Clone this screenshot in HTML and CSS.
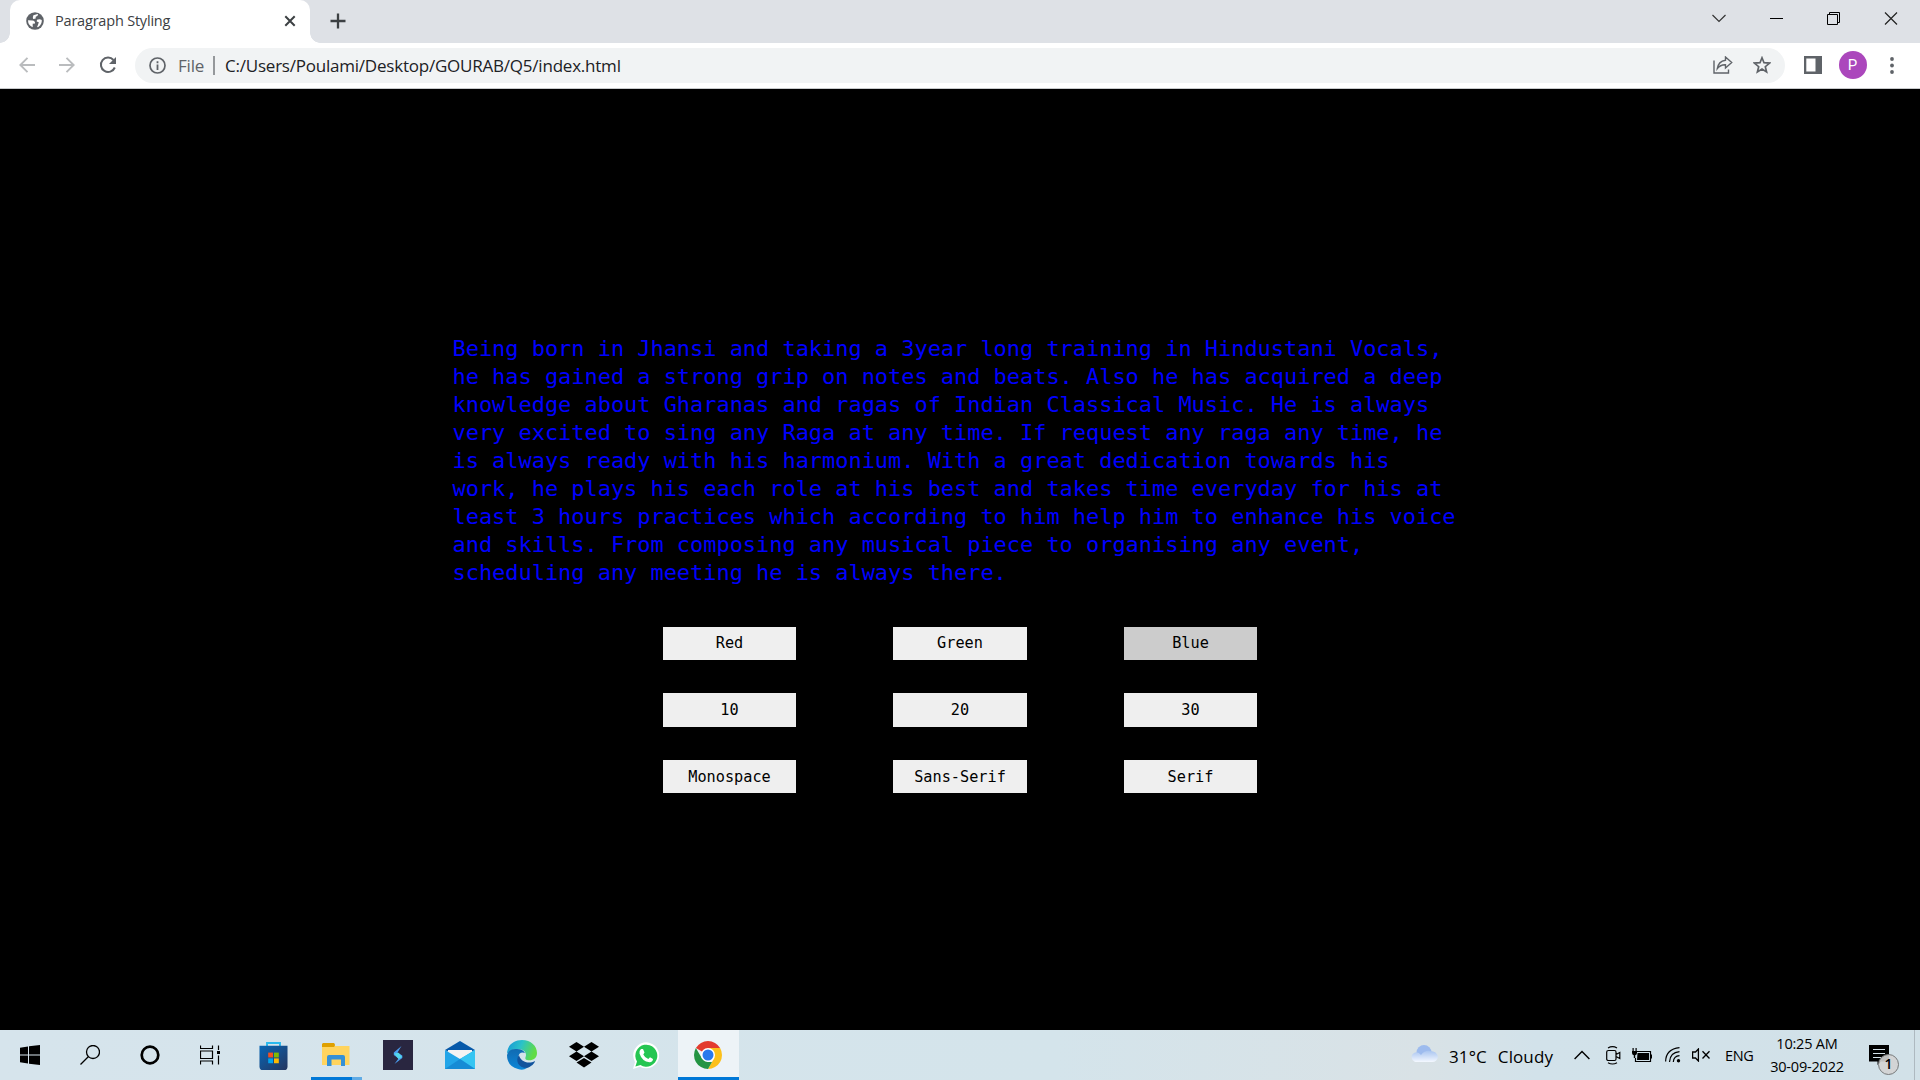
FILE: index.html
```html
<!DOCTYPE html>
<html lang="en">
<head>
<meta charset="utf-8">
<title>Paragraph Styling</title>
<link rel="stylesheet" href="styles.css">
</head>
<body>
<header class="tabstrip">
  <div class="tab">
    <svg class="favicon" width="18" height="18" viewBox="0 0 18 18"><circle cx="9" cy="9" r="8.8" fill="#5f6368"/><path d="M2 8.300 6.500 8.500Q9.300 8.800 9 11.500L6.700 11.800V15.200Q2 13.300 2 8.300ZM7.400 3.200 11.600 2Q12.700 2.500 11.300 4.100L9.700 4.800V6.400L7.600 7Q6.200 6.500 7.400 3.200ZM11 7.700Q14 6.700 15.800 8.100 16 12 12.700 14.800L11 15.300 12 12.800 12.800 10.300 10.700 9.500Z" fill="#fff"/></svg>
    <span class="tab-title">Paragraph Styling</span>
    <svg class="tab-close" width="12" height="12" viewBox="0 0 12 12"><path d="M1.300 1.300 10.700 10.700M10.700 1.300 1.300 10.700" stroke="#3c4043" stroke-width="2"/></svg>
  </div>
  <svg class="new-tab" width="16" height="16" viewBox="0 0 16 16"><path d="M8 .5V15.500M.5 8H15.500" stroke="#3c4043" stroke-width="2.300"/></svg>
  <div class="window-controls">
    <svg width="58" height="36" viewBox="0 0 58 36"><path d="m22.500 15 6.500 6.500L35.500 15" fill="none" stroke="#333" stroke-width="1.200"/></svg>
    <svg width="57" height="36" viewBox="0 0 57 36"><path d="M22 18.500H35" stroke="#000"/></svg>
    <svg width="57" height="36" viewBox="0 0 57 36"><path d="M22.500 14.500H32.500V24.500H22.500ZM24.500 14.500V12.500H34.500V22.500H32.500" fill="none" stroke="#000"/></svg>
    <svg width="58" height="36" viewBox="0 0 58 36"><path d="m23 12.500 12 12M35 12.500l-12 12" stroke="#222" stroke-width="1.200"/></svg>
  </div>
</header>
<nav class="toolbar">
  <svg width="16" height="16" viewBox="0 0 16 16"><path d="M16 8H1.500M8.500.8 1.300 8l7.200 7.200" fill="none" stroke="#babcbe" stroke-width="1.900"/></svg>
  <svg width="16" height="16" viewBox="0 0 16 16"><path d="M0 8H14.500M7.500.8 14.700 8l-7.200 7.200" fill="none" stroke="#babcbe" stroke-width="1.900"/></svg>
  <svg width="18" height="18" viewBox="0 0 18 18"><path d="M15.800 11.500A7.200 7.200 0 1 1 14.500 4" fill="none" stroke="#5f6368" stroke-width="2"/><path d="M17 1V8H10Z" fill="#5f6368"/></svg>
  <div class="omnibox">
    <svg width="17" height="17" viewBox="0 0 17 17"><circle cx="8.500" cy="8.500" r="7.500" fill="none" stroke="#5f6368" stroke-width="1.700"/><path d="M8.500 7.500V13M8.500 4.300V6.200" stroke="#5f6368" stroke-width="1.800"/></svg>
    <span class="scheme">File</span>
    <span class="divider"></span>
    <span class="url">C:/Users/Poulami/Desktop/GOURAB/Q5/index.html</span>
    <svg class="share" width="20" height="18" viewBox="0 0 20 18"><path d="M1 4.500V17H15.500V13.500" fill="none" stroke="#5f6368" stroke-width="1.400"/><path d="M12.500 1 18.700 6.500 12.500 12V8.800Q7.500 8.500 4.300 12.700 5.300 5.200 12.500 4.200Z" fill="none" stroke="#5f6368" stroke-width="1.400"/></svg>
    <svg width="18" height="18" viewBox="0 0 18 18"><path d="M9 1.800 11 6.700 16.500 7.100 12.300 10.700 13.600 16 9 13.100 4.400 16 5.700 10.700 1.500 7.100 7 6.700Z" fill="none" stroke="#5f6368" stroke-width="1.700"/></svg>
  </div>
  <svg class="panel" width="18" height="18" viewBox="0 0 18 18"><path d="M0 0H18V18H0ZM2.300 2.500V15.500H11.500V2.500Z" fill="#5f6368" fill-rule="evenodd"/></svg>
  <span class="avatar">P</span>
  <svg class="menu" width="4" height="17" viewBox="0 0 4 17"><g fill="#5f6368"><circle cx="2" cy="2" r="1.900"/><circle cx="2" cy="8.500" r="1.900"/><circle cx="2" cy="15" r="1.900"/></g></svg>
</nav>
<main class="page">
  <p class="paragraph">Being born in Jhansi and taking a 3year long training in Hindustani Vocals, he has gained a strong grip on notes and beats. Also he has acquired a deep knowledge about Gharanas and ragas of Indian Classical Music. He is always very excited to sing any Raga at any time. If request any raga any time, he is always ready with his harmonium. With a great dedication towards his work, he plays his each role at his best and takes time everyday for his at least 3 hours practices which according to him help him to enhance his voice and skills. From composing any musical piece to organising any event, scheduling any meeting he is always there.</p>
  <div class="buttons">
    <button>Red</button><button>Green</button><button class="active">Blue</button>
    <button>10</button><button>20</button><button>30</button>
    <button>Monospace</button><button>Sans-Serif</button><button>Serif</button>
  </div>
</main>
<footer class="taskbar">
  <div class="system">
    <svg width="20" height="20" viewBox="0 0 20 20"><path d="M0 2.800 8 1.500V9.500H0ZM9 1.300 20 0V9.500H9ZM0 10.500H8V18.500L0 17.300ZM9 10.500H20V20L9 18.700Z"/></svg>
    <svg width="20" height="20" viewBox="0 0 20 20"><g fill="none" stroke="#000" stroke-width="1.300"><circle cx="13" cy="7" r="6.500"/><path d="M8.500 11.500.5 19.500"/></g></svg>
    <svg width="20" height="20" viewBox="0 0 20 20"><circle cx="10" cy="10" r="8.300" fill="none" stroke="#000" stroke-width="2.700"/></svg>
    <svg width="20" height="20" viewBox="0 0 20 20"><path d="M.5.500V3.500H12.500V.500M.5 19.500V16H12.500V19.500M.5 6H12.500V13.500H.5ZM18.500.500V5M18.500 10.500V19.500" fill="none" stroke="#000" stroke-width="1.200"/><path d="M17 6h3v3h-3Z"/></svg>
  </div>
  <div class="apps">
    <span class="app store"><svg width="29" height="29" viewBox="0 0 30 30"><defs><linearGradient id="store" x2="1" y2="1"><stop stop-color="#0866b5"/><stop offset="1" stop-color="#25355f"/></linearGradient></defs><path d="M8.300 6V2H21.700V6" fill="none" stroke="#29b9ee" stroke-width="2"/><path d="M.5 5H29.500V26Q29.500 30 26 30H4Q.5 30 .5 26Z" fill="url(#store)"/><path d="M9.500 12h5v5h-5Z" fill="#f25022"/><path d="M15.500 12h5v5h-5Z" fill="#7fba00"/><path d="M9.500 18h5v5h-5Z" fill="#00a4ef"/><path d="M15.500 18h5v5h-5Z" fill="#ffb900"/></svg></span>
    <span class="app open"><svg width="28" height="24" viewBox="0 0 28 24"><path d="M0 3H27.500V22H0Z" fill="#ffd45e"/><path d="M1 0H12Q14 2 12 4H0V1Z" fill="#dfa000"/><path d="M5 23V14Q5 12 7 12H21Q23 12 23 14V23H19V16.500H9.500V23Z" fill="#3490d5"/></svg></span>
    <span class="app"><svg width="30" height="30" viewBox="0 0 30 30"><path d="M0 0H30V30H0Z" fill="#292640"/><path d="M18.500 6 10.800 12.500V15L15.500 18.500 11.500 24 19.300 18V15.500L14.500 12.500Z" fill="#4a9df0"/><path d="M11 13.500 15.500 12.800 19.300 17 15.500 19Z" fill="#54d6e9"/></svg></span>
    <span class="app"><svg width="30" height="28" viewBox="0 0 30 28"><path d="M0 9 15 0 30 9 15 17Z" fill="#0759a9"/><path d="M3 9H27V16L15 20 3 15Z" fill="#f3f3f3"/><path d="M0 9 15 18 30 9V28H0Z" fill="#22a5e8"/><path d="M15 18 30 9V28Z" fill="#35c5f2"/><path d="M0 28H30L15 18Z" fill="#168bd5"/></svg></span>
    <span class="app"><svg width="30" height="30" viewBox="0 0 30 30"><defs><linearGradient id="edge" x2="1" y2=".3"><stop stop-color="#1593d8"/><stop offset=".5" stop-color="#2bc2c9"/><stop offset="1" stop-color="#61dc46"/></linearGradient><linearGradient id="wave" x2="0" y2="1"><stop stop-color="#116ab1"/><stop offset="1" stop-color="#0c87d8"/></linearGradient></defs><path d="M0 14C0 5 7 0 15 0 24 0 30 6 30 13 30 19 25 21 20 20 17 19 19 17 19 15 19 11 15 9 10 9 5 9 1 12 0 14Z" fill="url(#edge)"/><path d="M0 15Q2 8 10 9 16 9 18 13 12 11 11 18 11 25 20 28 16 31 11 29 0 26 0 15Z" fill="url(#wave)"/><path d="M12 15C8 20 11 28 20 28 24 27 28 23 28 21 21 25 13 21 12 15Z" fill="#11539d"/></svg></span>
    <span class="app"><svg width="30" height="26" viewBox="0 0 30 26"><path d="M7.500 0 15 4.700 7.500 9.400 0 4.700ZM22.500 0 30 4.700 22.500 9.400 15 4.700ZM7.500 9.600 15 14.300 7.500 19 0 14.300ZM22.500 9.600 30 14.300 22.500 19 15 14.300ZM7.500 20.500 15 16 22.500 20.500 15 25.500Z"/></svg></span>
    <span class="app"><svg width="26" height="27" viewBox="0 0 26 27"><path d="M0 27 2 20A13 13 0 1 1 7 24.800Z" fill="#fff"/><path d="M2.400 24.600 4 19.500A11 11 0 1 1 7.500 23Z" fill="#25c652"/><path d="M8 7H10L11.500 10.500 10.300 12.500Q12 16 15.300 17L17 15.200 20 17Q20 20 16.500 20.300 9 19.500 6.500 11.500 6 8.500 8 7Z" fill="#fff"/></svg></span>
    <span class="app current"><svg width="28" height="28" viewBox="0 0 28 28"><path d="M14 14 1.880 7A14 14 0 0 1 26.120 7Z" fill="#e33b2e"/><path d="M14 7H26.120A14 14 0 0 1 14 28L20 17.500Z" fill="#fcc01a"/><path d="M1.880 7 8 17.500 14 21H18L14 28A14 14 0 0 1 1.880 7Z" fill="#249443"/><circle cx="14" cy="14" r="7" fill="#fff"/><circle cx="14" cy="14" r="5.500" fill="#2979ed"/></svg></span>
  </div>
  <div class="tray">
    <svg class="cloud" width="28" height="17" viewBox="0 0 28 17"><defs><linearGradient id="cloud" x2="0" y2="1"><stop stop-color="#a9c5f0"/><stop offset="1" stop-color="#f4f8ff"/></linearGradient></defs><circle cx="14" cy="7.500" r="7.500" fill="#9dbbee"/><path d="M5 17A5 5 0 0 1 4 8Q8 6 11 10 15 5 20 6 27 6 28 12 27 17 22 17Z" fill="url(#cloud)"/></svg>
    <span class="weather"><span>31°C</span><span>Cloudy</span></span>
    <svg class="chevron" width="16" height="10" viewBox="0 0 16 10"><path d="m.6 9 7.400-7.500L15.400 9" fill="none" stroke="#000" stroke-width="1.400"/></svg>
    <svg class="meet" width="15" height="19" viewBox="0 0 15 19"><path d="M2.500 4.500H8.500Q10 4.500 10 6V13Q10 14.500 8.500 14.500H2.500Q.7 14.500.7 13V6Q.7 4.500 2.500 4.500ZM10 8.500 13.800 6.500V12.500L10 10.500M2 2Q6.500-.6 11 2M2 16.700Q6.500 19.300 11 16.700" fill="none" stroke="#000" stroke-width="1.200"/></svg>
    <svg class="battery" width="20" height="15" viewBox="0 0 20 15"><path d="M4 3.500H18.500V13.500H3.500V10M19.500 6.500V10.500" fill="none" stroke="#000" stroke-width="1.200"/><path d="M5.500 5H17V12H5ZM0 3H5V5Q5 7 3.200 7.300V10H1.800V7.300Q0 7 0 5ZM.5 0H1.700V3H.5ZM3.500 0H4.700V3H3.500Z"/></svg>
    <svg class="wifi" width="16" height="16" viewBox="0 0 16 16"><path d="M.6 14.500Q1 2 14.500.7M4.500 15Q5 5.500 14.500 4.700M8.300 15Q8.800 9 14.500 8.700" fill="none" stroke="#000" stroke-width="1.200"/><circle cx="13.500" cy="13.700" r="1.700"/></svg>
    <svg class="volume" width="18" height="14" viewBox="0 0 18 14"><path d="M.6 4H3.500L6.400 1V13L3.500 10H.6ZM10.500 3.200 17.500 10.500M17.500 3.200 10.500 10.500" fill="none" stroke="#000" stroke-width="1.300"/></svg>
    <span class="lang">ENG</span>
    <span class="clock"><span class="time">10:25 AM</span><span class="date">30-09-2022</span></span>
    <span class="notifications"><svg width="20" height="20" viewBox="0 0 20 20"><path d="M0 0H20V16.500H12L8.500 20V16.500H0Z"/><path d="M4 4.500H16M4 8.500H16M4 12.500H12" stroke="#d4e1e8" stroke-width="1.200"/></svg><span class="count">1</span></span>
    <span class="show-desktop"></span>
  </div>
</footer>
</body>
</html>
```
FILE: styles.css
```css
* { box-sizing: border-box; }
body { margin: 0; width: 1920px; height: 1080px; overflow: hidden; display: flex; flex-direction: column; background: #000; font-family: "Open Sans", "Noto Sans", sans-serif; white-space: nowrap; }
svg { display: block; flex: none; }

.tabstrip { height: 43px; background: #dee1e6; display: flex; padding-left: 10px; }
.tab { position: relative; width: 300px; height: 43px; border-radius: 10px 10px 0 0; background: #fff; display: flex; align-items: center; padding: 0 14px 1px 16px; }
.tab::before, .tab::after { content: ""; position: absolute; bottom: 0; width: 10px; height: 10px; }
.tab::before { left: -10px; background: radial-gradient(circle at 0 0, transparent 9.5px, #fff 10px); }
.tab::after { right: -10px; background: radial-gradient(circle at 100% 0, transparent 9.5px, #fff 10px); }
.tab-title { margin-left: 11px; padding-bottom: 2px; color: #3c4043; font-size: 14.5px; letter-spacing: -.2px; }
.tab-close { margin-left: auto; }
.new-tab { margin: 13px 0 0 19.500px; }
.window-controls { display: flex; margin-left: auto; }

.toolbar { height: 46px; background: #fff; border-bottom: 1px solid #c8cacc; display: flex; align-items: center; padding: 0 26px 1px 19px; }
.toolbar > svg + svg { margin-left: 24px; }
.omnibox { width: 1650px; height: 35px; margin-left: 18px; border-radius: 18px; background: #f1f3f4; display: flex; align-items: center; padding: 0 14px 0 14px; font-size: 17px; }
.scheme { width: 27px; margin-left: 12px; color: #5f6368; letter-spacing: -.2px; }
.divider { width: 2px; height: 19px; margin-left: 8px; background: #95989b; }
.url { margin-left: 10px; color: #202124; letter-spacing: -.22px; }
.share { margin-left: auto; margin-right: 20px; }
.panel { margin-left: 18.500px; }
.avatar { width: 28px; height: 28px; margin-left: 17px; border-radius: 50%; background: #ab47bc; color: #fff; display: flex; align-items: center; justify-content: center; font: 15px Roboto, sans-serif; }
.menu { margin-left: auto; }

.page { height: 941px; padding-top: 246px; background: #000; }
.paragraph { width: 1015px; height: 252px; margin: 0 auto; color: #00f; font: 21.930px/28px "DejaVu Sans Mono", monospace; white-space: normal; }
.buttons { display: grid; grid-template-columns: repeat(3, 133.300px); grid-auto-rows: 33.330px; gap: 33.330px 97.200px; justify-content: center; margin-top: 39.700px; }
.buttons button { border: 0; padding: 0; background: #efefef; color: #000; font: 15.230px "DejaVu Sans Mono", monospace; }
.buttons .active { background: #ccc; }

.taskbar { height: 50px; background: linear-gradient(90deg, #d6e4ec, #d4e4eb 55%, #d9e2e6 74%, #d2e2ea 80%, #d2e1e8); display: flex; }
.system { width: 243px; height: 50px; display: grid; grid-template-columns: repeat(4, 60px); place-items: center; }
.apps { display: flex; gap: 1.140px; }
.app { width: 61px; height: 50px; display: flex; align-items: center; justify-content: center; }
.store { padding-bottom: 0; }
.open { background: linear-gradient(90deg, #0078d7 0 81%, #60abe5 81%) 6px 47px / 51px 3px no-repeat; }
.current { background: #edf3f7; border-bottom: 3px solid #0078d7; padding-top: 3px; }

.tray { display: flex; align-items: center; margin-left: auto; }
.cloud { margin-bottom: 4px; }
.weather { width: 104px; margin-left: 11px; display: flex; justify-content: space-between; padding-top: 3px; font-size: 17px; letter-spacing: .1px; }
.chevron { margin-left: 21px; }
.meet { margin-left: 16px; }
.battery { margin-left: 11px; }
.wifi { margin-left: 13px; }
.volume { margin-left: 11px; }
.lang { width: 28px; margin-left: 15px; font-size: 14.500px; letter-spacing: -.4px; }
.clock { width: 76px; margin-left: 16px; display: grid; grid-template-rows: 23px 23px; justify-items: center; line-height: 23px; font-size: 14.500px; letter-spacing: -.2px; }
.notifications { position: relative; width: 30px; height: 30px; margin: 10px 0 0 24px; }
.count { position: absolute; left: 9px; top: 9px; width: 21px; height: 21px; border: 1px solid #77797a; border-radius: 50%; background: rgba(211, 211, 211, .9); text-align: center; font-size: 14px; line-height: 18px; font-weight: 600; }
.show-desktop { width: 6px; height: 50px; margin-left: 15px; border-left: 1px solid #aeb9c0; }
```
